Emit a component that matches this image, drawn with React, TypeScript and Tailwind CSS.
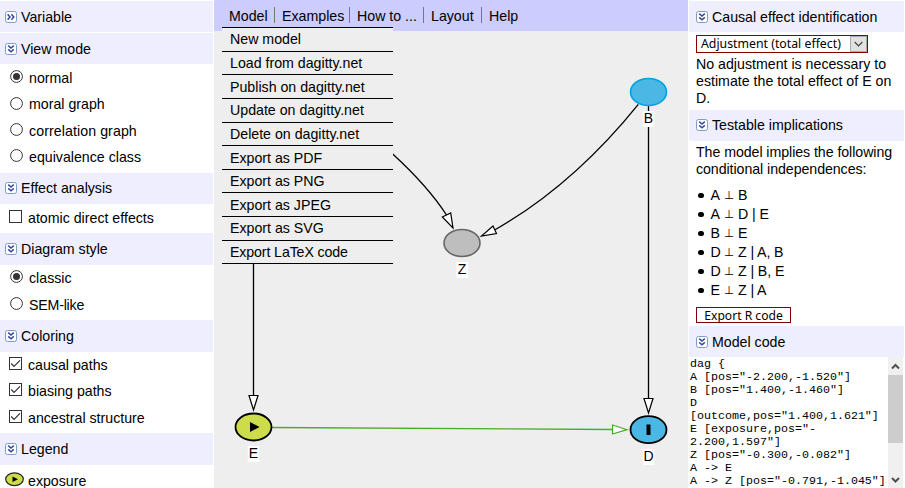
import type { ReactNode } from "react";

function Chevrons({ closed = false }: { closed?: boolean }) {
  return (
    <svg width="12" height="12" viewBox="0 0 12 12" className="shrink-0">
      <rect x="0.5" y="0.5" width="11" height="11" rx="2" fill="#fff" stroke="#7f9db9" />
      <g transform={closed ? "rotate(-90 6 6)" : undefined} fill="none" stroke="#34479a" strokeWidth="1.5">
        <path d="M3.2 2.6 L6 5 L8.8 2.6" />
        <path d="M3.2 6.4 L6 8.8 L8.8 6.4" />
      </g>
    </svg>
  );
}

function Header({ title, closed, className }: { title: string; closed?: boolean; className: string }) {
  return (
    <h2 className={`flex shrink-0 items-center bg-[#eeeeff] ${className}`}>
      <span className="-mt-px flex">
        <Chevrons closed={closed} />
      </span>
      <span className="ml-1">{title}</span>
    </h2>
  );
}

function Radio({ label, on, className = "h-[26px]" }: { label: string; on?: boolean; className?: string }) {
  return (
    <label className={`flex items-center pl-2.5 ${className}`}>
      <svg width="13" height="13" viewBox="0 0 13 13" className="-mt-[3px] mr-1.5 shrink-0">
        <circle cx="6.5" cy="6.5" r="5.9" fill="#fff" stroke="#333" strokeWidth="1" />
        {on && <circle cx="6.5" cy="6.5" r="3.5" fill="#333" />}
      </svg>
      {label}
    </label>
  );
}

function Check({ label, on }: { label: string; on?: boolean }) {
  return (
    <label className="flex h-[26.5px] items-center pl-[9px]">
      <svg width="13" height="13" viewBox="0 0 13 13" className="-mt-1 mr-1.5 shrink-0">
        <rect x="0.5" y="0.5" width="12" height="12" fill="#fff" stroke="#333" />
        {on && <path d="M2.2 6.5 L5 9.3 L11 3.3" fill="none" stroke="#333" strokeWidth="1.2" />}
      </svg>
      {label}
    </label>
  );
}

const commands = [
  "New model",
  "Load from dagitty.net",
  "Publish on dagitty.net",
  "Update on dagitty.net",
  "Delete on dagitty.net",
  "Export as PDF",
  "Export as PNG",
  "Export as JPEG",
  "Export as SVG",
  "Export LaTeX code",
];

function MenuBar() {
  const tab = "flex h-4 items-center border-r border-[#777] pt-0.5";
  return (
    <nav className="relative h-[31px] bg-[#ccccff] pt-[7px]">
      <div className="flex pl-[15px]">
        <span className={`${tab} w-[46px]`}>Model</span>
        <span className={`${tab} w-[75px] pl-[7px]`}>Examples</span>
        <span className={`${tab} w-[74px] pl-[7px]`}>How to ...</span>
        <span className={`${tab} w-[58px] pl-[7px]`}>Layout</span>
        <span className="flex h-4 items-center pl-[7px] pt-0.5">Help</span>
      </div>
      <ul className="absolute left-2 top-[27px] w-[171px] border-t border-black bg-[#eeeeee]">
        {commands.map((c) => (
          <li
            key={c}
            className="flex h-[23.65px] items-center border-b border-black pl-2 pt-px last:tracking-[-0.12px]"
          >
            {c}
          </li>
        ))}
      </ul>
    </nav>
  );
}

function NodeLabel({ x, y, children }: { x: number; y: number; children: ReactNode }) {
  return (
    <g>
      <rect x={x - 5.5} y={y - 12} width="11.5" height="16" fill="#fff" />
      <text x={x} y={y} textAnchor="middle" fontSize="14" fill="#000">
        {children}
      </text>
    </g>
  );
}

function Diagram() {
  return (
    <svg width="474" height="457" viewBox="214 31 474 457" className="block">
      <g fill="none" stroke="#000" strokeWidth="1.3">
        <path d="M253.5 85 V396" />
        <path d="M648.5 105 V399" />
        <path d="M253.5 85.5 Q345 109 393 154.3 Q428 186.5 446.5 215" />
        <path d="M638.3 104.3 Q573.2 185.1 495 229.8" />
        <path d="M272 427.5 L613 429.5" stroke="#4dac26" />
      </g>
      <g fill="#fff" stroke="#000" strokeWidth="1.2">
        <path d="M249 395.5 H258 L253.5 410 Z" />
        <path d="M644 398.5 H653 L648.5 413 Z" />
        <path d="M442.3 217 L450.7 212.9 L453 228 Z" />
        <path d="M493 226 L496.5 233.5 L481.5 236 Z" />
        <path d="M612.5 425 V434 L627 429.7 Z" stroke="#4dac26" />
      </g>
      <ellipse cx="462" cy="243" rx="18" ry="13.5" fill="#bebebe" stroke="#666" strokeWidth="1.6" />
      <ellipse cx="648.5" cy="92" rx="18" ry="13.5" fill="#4ab7e4" stroke="#00a2e0" strokeWidth="1.6" />
      <ellipse cx="253.5" cy="427" rx="18" ry="13.5" fill="#cddc4b" stroke="#000" strokeWidth="1.8" />
      <ellipse cx="648.5" cy="429.7" rx="18" ry="13.5" fill="#4ab7e4" stroke="#000" strokeWidth="1.8" />
      <path d="M250 422 L259.5 427 L250 432 Z" fill="#000" />
      <rect x="646.5" y="424.5" width="4" height="10.5" fill="#000" />
      <NodeLabel x={462} y={274}>Z</NodeLabel>
      <NodeLabel x={648.3} y={123}>B</NodeLabel>
      <NodeLabel x={253.3} y={458}>E</NodeLabel>
      <NodeLabel x={648.5} y={461}>D</NodeLabel>
    </svg>
  );
}

const independences = [
  ["A", "B"],
  ["A", "D | E"],
  ["B", "E"],
  ["D", "Z | A, B"],
  ["D", "Z | B, E"],
  ["E", "Z | A"],
];

const code = `dag {
A [pos="-2.200,-1.520"]
B [pos="1.400,-1.460"]
D
[outcome,pos="1.400,1.621"]
E [exposure,pos="-
2.200,1.597"]
Z [pos="-0.300,-0.082"]
A -> E
A -> Z [pos="-0.791,-1.045"]`;

export default function App() {
  return (
    <div className="flex h-[488px] w-[905px] overflow-hidden bg-white font-['Liberation_Sans',Arial,sans-serif] text-[14.2px] leading-[17px] text-black">
      <aside className="mr-px flex w-[213px] shrink-0 flex-col pt-px">
        <Header title="Variable" closed className="mb-px h-[31px] pl-[5px] pt-px" />
        <Header title="View mode" className="h-[31px] pl-[5px] pt-px" />
        <div className="h-[109px] shrink-0 pt-px">
          <Radio label="normal" on />
          <Radio label="moral graph" className="h-[27px]" />
          <Radio label="correlation graph" className="h-[26px] tracking-[0.08px]" />
          <Radio label="equivalence class" />
        </div>
        <Header title="Effect analysis" className="h-[31px] pl-[5px]" />
        <div className="h-[29px] shrink-0 pt-px">
          <Check label="atomic direct effects" />
        </div>
        <Header title="Diagram style" className="h-8 pl-[5px]" />
        <div className="h-[55px] shrink-0">
          <Radio label="classic" on />
          <Radio label="SEM-like" className="h-[28px] tracking-[-0.2px]" />
        </div>
        <Header title="Coloring" className="h-8 pl-[5px]" />
        <div className="h-[81px] shrink-0">
          <Check label="causal paths" on />
          <Check label="biasing paths" on />
          <Check label="ancestral structure" on />
        </div>
        <Header title="Legend" className="h-8 pl-[5px]" />
        <div className="flex shrink-0 items-start pl-[5px] pt-[7px]">
          <svg width="19" height="15" viewBox="0 0 19 15" className="mr-1 shrink-0">
            <ellipse cx="9.5" cy="7.2" rx="8.8" ry="6.4" fill="#cddc4b" stroke="#222" strokeWidth="1.2" />
            <path d="M7.5 4.4 L13 7.2 L7.5 10 Z" fill="#000" />
          </svg>
          <span className="pt-px">exposure</span>
        </div>
      </aside>

      <main className="w-[474px] shrink-0 bg-[#eeeeee]">
        <MenuBar />
        <Diagram />
      </main>

      <aside className="ml-px flex w-[215px] shrink-0 flex-col pt-px">
        <Header title="Causal effect identification" className="h-[31px] pl-[7px] pt-px" />
        <div className="h-[78px] shrink-0 pl-[7px] pt-[3px]">
          <div className="flex h-[18px] w-[172px] items-center justify-between border border-[#800000] pl-1 font-['Noto_Sans',sans-serif] text-[12.3px] leading-4">
            <span className="whitespace-nowrap">Adjustment (total effect)</span>
            <span className="flex h-4 w-[17px] items-center justify-center border border-[#aaa] bg-[#e1e1e1]">
              <svg width="9" height="6" viewBox="0 0 9 6">
                <path d="M0.7 1 L4.5 4.8 L8.3 1" fill="none" stroke="#444" strokeWidth="1.2" />
              </svg>
            </span>
          </div>
          <p className="mt-[3px]">
            No adjustment is necessary to
            <br />
            estimate the total effect of E on
            <br />
            D.
          </p>
        </div>
        <Header title="Testable implications" className="h-[31px] pl-[7px]" />
        <div className="h-[185px] shrink-0 pl-[7px] pt-[3px]">
          <p className="tracking-[-0.06px]">
            The model implies the following
            <br />
            conditional independences:
          </p>
          <ul className="mt-2">
            {independences.map(([a, b]) => (
              <li key={a + b} className="flex h-[19px] items-center">
                <span className="ml-[2px] mr-[7px] size-[5.5px] rounded-full bg-black" />
                <span className="w-[13.5px]">{a}</span>
                <span className="w-[14px] font-['DejaVu_Sans',sans-serif] text-[11.5px]">⊥</span>
                <span className="tracking-[-0.1px]">{b}</span>
              </li>
            ))}
          </ul>
          <button className="mt-[7px] flex h-4 w-[95px] items-center justify-center border border-[#800000] bg-white pt-px font-['Noto_Sans',sans-serif] text-[12.1px] leading-[14px]">
            Export R code
          </button>
        </div>
        <Header title="Model code" className="h-[31px] pl-[7px] pt-px" />
        <div className="flex h-[131px] shrink-0">
          <pre className="w-[199px] overflow-hidden pl-px pt-px font-['Liberation_Mono',monospace] text-[11.67px] leading-[13px]">
            {code}
          </pre>
          <div className="flex w-[15px] flex-col items-center bg-[#f0f0f0] pt-px">
            <svg width="15" height="17" viewBox="0 0 15 17" className="shrink-0">
              <path d="M4 10.5 L7.5 7 L11 10.5" fill="none" stroke="#505050" strokeWidth="2" />
            </svg>
            <div className="h-[68px] w-full bg-[#cdcdcd]" />
            <svg width="15" height="17" viewBox="0 0 15 17" className="mt-auto shrink-0">
              <path d="M4 7 L7.5 10.5 L11 7" fill="none" stroke="#505050" strokeWidth="2" />
            </svg>
          </div>
        </div>
      </aside>
    </div>
  );
}
